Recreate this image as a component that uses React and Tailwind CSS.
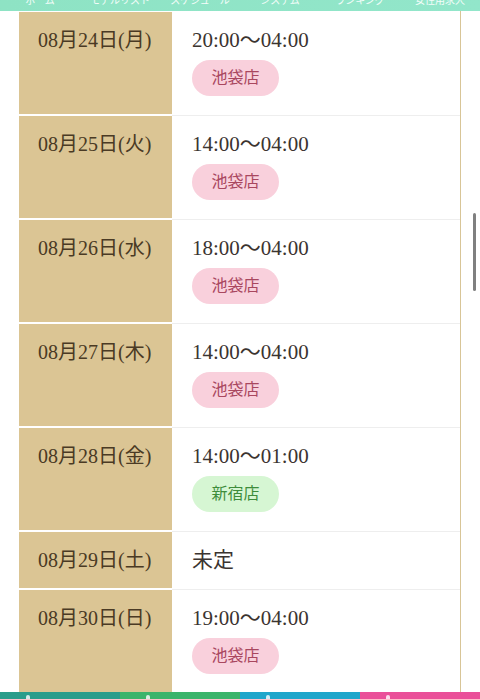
const NAV = ["ホーム", "モデルリスト", "スケジュール", "システム", "ランキング", "女性用求人"];

const SCHEDULE = [
  { date: "08月24日(月)", time: "20:00～04:00", shop: "池袋店" },
  { date: "08月25日(火)", time: "14:00～04:00", shop: "池袋店" },
  { date: "08月26日(水)", time: "18:00～04:00", shop: "池袋店" },
  { date: "08月27日(木)", time: "14:00～04:00", shop: "池袋店" },
  { date: "08月28日(金)", time: "14:00～01:00", shop: "新宿店" },
  { date: "08月29日(土)", time: "未定" },
  { date: "08月30日(日)", time: "19:00～04:00", shop: "池袋店" },
];

const FOOT = ["bg-[#2a9d8b]", "bg-[#3bb46b]", "bg-[#1fa6cb]", "bg-[#ea5099]"];

function ShopBadge({ shop }) {
  const green = shop === "新宿店";
  return (
    <span
      className={`mt-[11px] flex h-[36px] w-[87px] items-center justify-center rounded-full text-[16px] ${
        green ? "bg-[#d6f6d3] text-[#3e8c3b]" : "bg-[#f9d0dc] text-[#a9475f]"
      }`}
    >
      {shop}
    </span>
  );
}

export default function App() {
  return (
    <div
      className="relative h-[699px] w-[480px] overflow-hidden bg-white"
      style={{ fontFamily: '"Liberation Serif", "Noto Sans CJK JP", serif' }}
    >
      {/* top nav, mostly scrolled out of view */}
      <nav className="grid h-[11px] grid-cols-6 overflow-hidden bg-gradient-to-r from-[#8ee3c4] to-[#92e6ca]">
        {NAV.map((item) => (
          <span key={item} className="-mt-[7px] text-center text-[10px] leading-[14px] text-white/90" style={{ fontFamily: '"Noto Sans CJK JP", sans-serif' }}>
            {item}
          </span>
        ))}
      </nav>

      <div className="ml-[19px] mr-[19px] border-r border-[#d8c597] pt-[1px]">
        {SCHEDULE.map((row, i) => (
          <div key={row.date} className={`flex ${i > 0 ? "mt-[2px]" : ""}`}>
            <div className="w-[153px] shrink-0 bg-[#dbc594] pl-[19px] pt-[19px] text-[20px] leading-[18px] text-[#4a3a24]">
              {row.date}
            </div>
            <div
              className={`flex flex-1 flex-col pl-[20px] pt-[19px] ${row.shop ? "pb-[18px]" : "pb-[19px]"} ${
                i > 0 ? "shadow-[0_-1px_0_#eeeeee]" : ""
              }`}
            >
              <span className="text-[21px] leading-[18px] text-[#3b3430]">{row.time}</span>
              {row.shop && <ShopBadge shop={row.shop} />}
            </div>
          </div>
        ))}
      </div>

      <div className="grid h-[8px] grid-cols-4">
        {FOOT.map((c) => (
          <div key={c} className={`${c} relative`}>
            <span className="absolute left-[26px] top-[3px] h-[5px] w-[4px] rounded-t-sm bg-white/80" />
          </div>
        ))}
      </div>

      <div className="absolute left-[473px] top-[213px] h-[78px] w-[3px] rounded-full bg-[#808080]" />
    </div>
  );
}
